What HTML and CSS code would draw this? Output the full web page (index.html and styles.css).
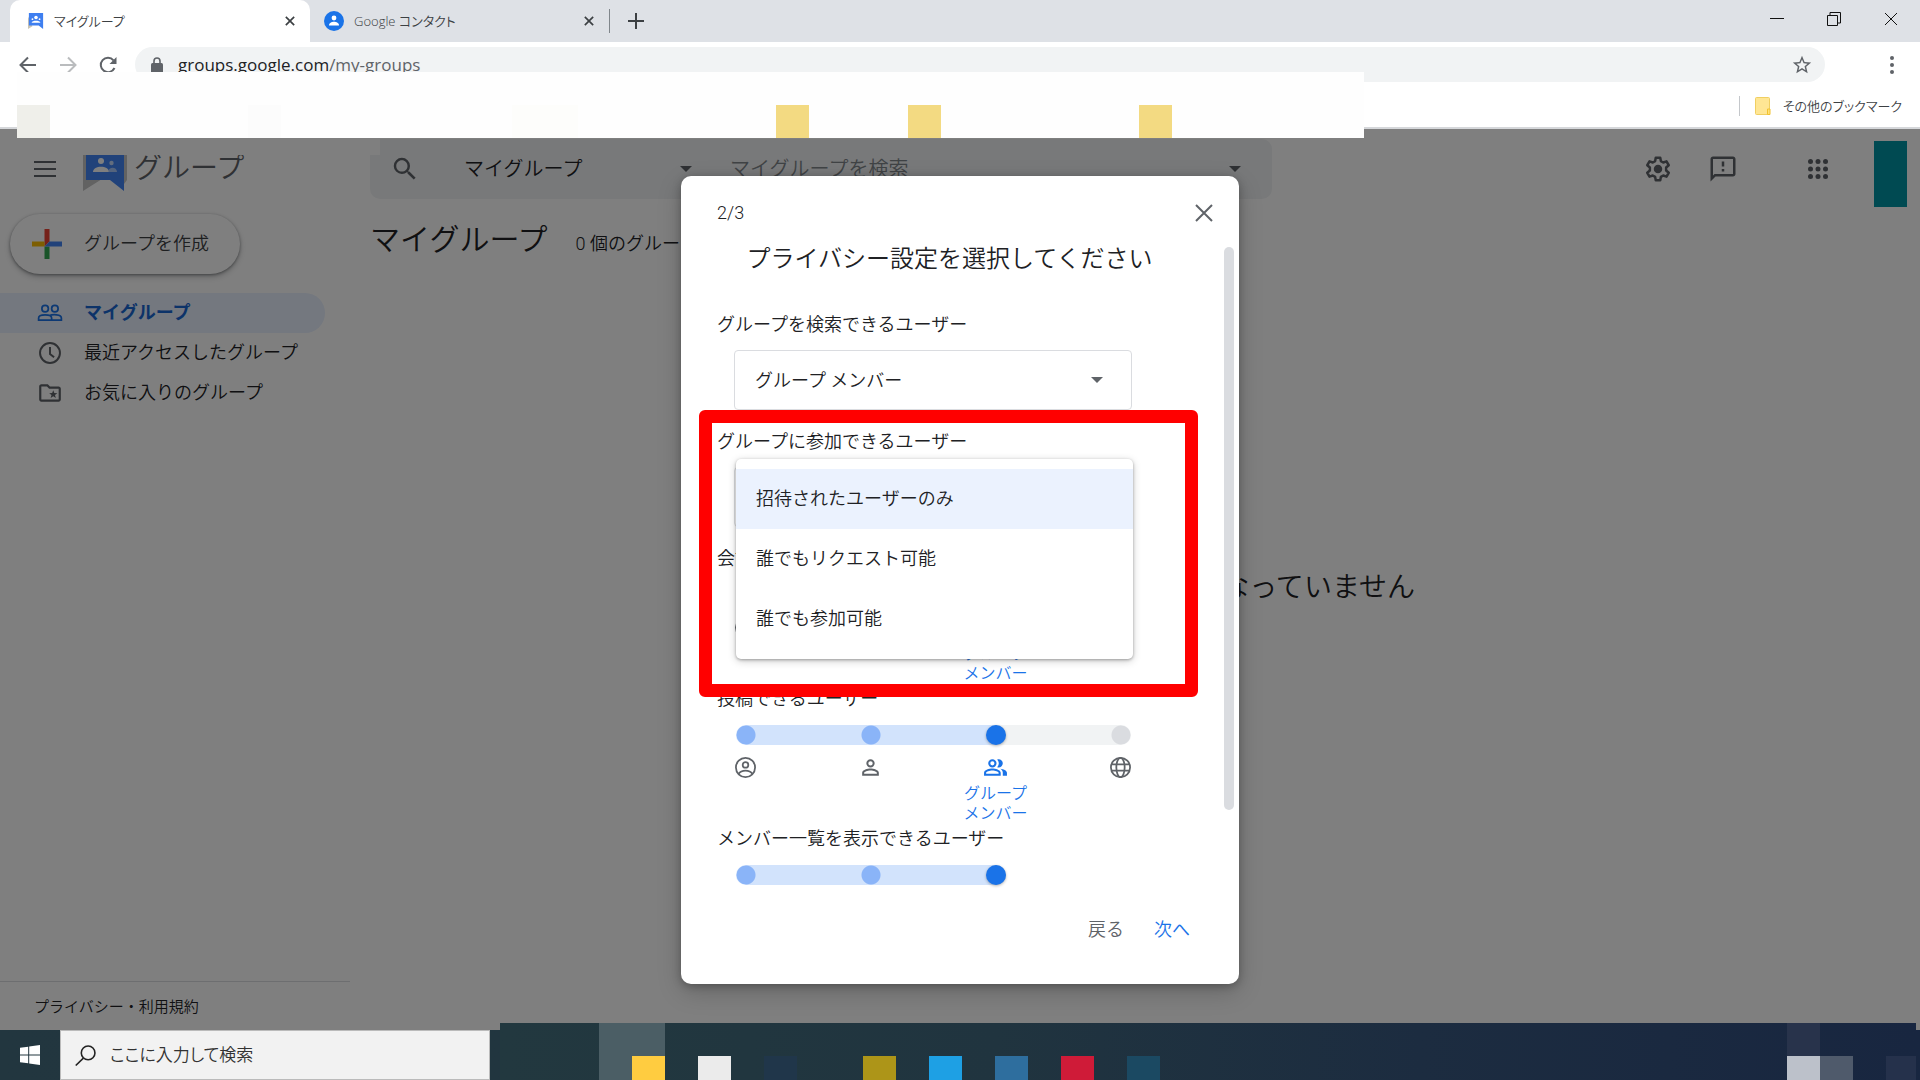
FILE: index.html
```html
<!DOCTYPE html>
<html lang="ja">
<head>
<meta charset="utf-8">
<meta name="viewport" content="width=device-width, initial-scale=1">
<title>マイグループ</title>
<link rel="stylesheet" href="styles.css">
</head>
<body>
<header class="chrome">
  <div class="tabstrip">
    <div class="tab tab-active">
      <svg class="favicon" viewBox="0 0 18 18"><path d="M0 4v14l5-3z" fill="#c9c4b4"/><path d="M1 0h16v18l-5-4H1z" fill="#3f7ff0"/><circle cx="9" cy="5" r="2" fill="#fff"/><circle cx="5" cy="7" r="1" fill="#fff"/><circle cx="13" cy="7" r="1" fill="#fff"/><path d="M4 11c1-3 9-3 10 0z" fill="#fff"/></svg>
      <span class="tab-title">マイグループ</span>
      <button class="tab-close" aria-label="タブを閉じる"><svg viewBox="0 0 12 12"><path d="M1 1l10 10M11 1L1 11"/></svg></button>
    </div>
    <div class="tab">
      <svg class="favicon favicon-round" viewBox="0 0 20 20"><circle cx="10" cy="10" r="10" fill="#1a73e8"/><circle cx="10" cy="7" r="2.4" fill="#fff"/><path d="M5 14.500c0-5 10-5 10 0z" fill="#fff"/></svg>
      <span class="tab-title">Google コンタクト</span>
      <button class="tab-close" aria-label="タブを閉じる"><svg viewBox="0 0 12 12"><path d="M1 1l10 10M11 1L1 11"/></svg></button>
    </div>
    <button class="new-tab" aria-label="新しいタブ"><svg viewBox="0 0 16 16"><path d="M8 0v16M0 8h16"/></svg></button>
    <div class="window-controls">
      <button aria-label="最小化"><svg viewBox="0 0 14 14"><path d="M0 6.500h14"/></svg></button>
      <button aria-label="元に戻す"><svg viewBox="0 0 14 14"><path d="M.5 3.500h10v10H.500zM3 3.500v-3h10.500v10.500H11"/></svg></button>
      <button aria-label="閉じる"><svg viewBox="0 0 14 14"><path d="M1 1l12 12M13 1L1 13"/></svg></button>
    </div>
  </div>
  <div class="toolbar">
    <button class="nav" aria-label="戻る"><svg viewBox="0 0 18 18"><path d="M17 9H2M9 1.500L1.500 9 9 16.500"/></svg></button>
    <button class="nav nav-off" aria-label="進む"><svg viewBox="0 0 18 18"><path d="M1 9h15M9 1.500L16.500 9 9 16.500"/></svg></button>
    <button class="nav" aria-label="再読み込み"><svg viewBox="0 0 18 18"><path d="M15.500 12A7.200 7.200 0 1 1 14.500 4.300"/><path d="M17.500 1v7h-7z" fill="#5f6368" stroke="none"/></svg></button>
    <div class="omnibox">
      <svg class="lock" viewBox="0 0 12 16"><rect y="6" width="12" height="10" rx="1.500" fill="#5f6368"/><path d="M3 7V4a3 3 0 0 1 6 0v3" fill="none" stroke="#5f6368" stroke-width="1.600"/></svg>
      <span class="url">groups.google.com<span class="path">/my-groups</span></span>
      <button class="star" aria-label="ブックマーク"><svg viewBox="0 0 24 24"><path d="M22 9.240l-7.190-.620L12 2 9.190 8.630 2 9.240l5.460 4.730L5.820 21 12 17.270 18.180 21l-1.630-7.030L22 9.240zM12 15.400l-3.760 2.270 1-4.280-3.320-2.880 4.380-.380L12 6.100l1.710 4.040 4.380.380-3.320 2.880 1 4.280L12 15.400z"/></svg></button>
    </div>
    <button class="kebab" aria-label="メニュー"><svg viewBox="0 0 4 18"><circle cx="2" cy="2" r="2"/><circle cx="2" cy="9" r="2"/><circle cx="2" cy="16" r="2"/></svg></button>
  </div>
  <nav class="bookmarks">
    <a href="#bookmarks"><svg class="folder" viewBox="0 0 16 18"><rect x=".5" y=".5" width="14" height="17" rx="1" fill="#ffe694" stroke="#f0cf62"/><path d="M12.500 12h2.500v5.500h-2.500z" fill="#ffe27a" stroke="#f2c230"/></svg>その他のブックマーク</a>
  </nav>
</header>

<div class="app">
  <div class="topbar">
    <button class="menu-btn" aria-label="メインメニュー"><svg viewBox="0 0 22 16"><path d="M0 0h22v2H0zM0 7h22v2H0zM0 14h22v2H0z"/></svg></button>
    <svg class="logo" viewBox="0 0 44 36"><path d="M0 0h5v24h14L0 36z" fill="#c4c4c4"/><path d="M41 0h3v25l-3 4z" fill="#c4c4c4"/><path d="M3 0h38v36L27 25H3z" fill="#4285f4"/><circle cx="18" cy="6" r="3" fill="#fff"/><path d="M10 17c0-7 16-7 16 0z" fill="#fff"/><circle cx="28.500" cy="8" r="2.200" fill="#c6dafc"/><path d="M25 17c1-6 9-5 9 0z" fill="#c6dafc" opacity=".8"/></svg>
    <span class="brand">グループ</span>
    <form class="search">
      <svg class="search-icon" viewBox="0 0 24 24"><path d="M15.500 14h-.790l-.280-.270A6.471 6.471 0 0 0 16 9.500 6.500 6.500 0 1 0 9.500 16c1.610 0 3.090-.590 4.230-1.570l.270.280v.790l5 4.990L20.490 19l-4.990-5zm-6 0C7.010 14 5 11.990 5 9.500S7.010 5 9.500 5 14 7.010 14 9.500 11.990 14 9.500 14z"/></svg>
      <span class="scope"><select aria-label="検索範囲"><option>マイグループ</option></select><i class="caret"></i></span>
      <input type="text" placeholder="マイグループを検索" aria-label="マイグループを検索">
      <i class="caret"></i>
    </form>
    <div class="actions">
      <button aria-label="設定"><svg class="i30" viewBox="0 0 24 24"><path fill="none" stroke="#5f6368" stroke-width="2" stroke-linejoin="round" d="M10.200 3h3.600l.5 2.700 1.900 1.100 2.600-.900 1.800 3.100-2.100 1.800v2.400l2.100 1.800-1.800 3.100-2.600-.900-1.900 1.100-.5 2.700h-3.600l-.5-2.700-1.900-1.100-2.600.900L3.400 15l2.100-1.800v-2.400L3.400 9l1.800-3.100 2.600.900 1.900-1.100z"/><circle cx="12" cy="12" r="3.400"/></svg></button>
      <button aria-label="フィードバック"><svg class="i30" viewBox="0 0 24 24"><path d="M20 2H4c-1.100 0-2 .9-2 2v18l4-4h14c1.100 0 2-.9 2-2V4c0-1.100-.9-2-2-2zm0 14H5.200L4 17.200V4h16v12zM11 12h2v2h-2zm0-6h2v4h-2z"/></svg></button>
      <button class="apps" aria-label="アプリ"><svg viewBox="0 0 20 20"><circle cx="2.500" cy="2.500" r="2.500"/><circle cx="10" cy="2.500" r="2.500"/><circle cx="17.500" cy="2.500" r="2.500"/><circle cx="2.500" cy="10" r="2.500"/><circle cx="10" cy="10" r="2.500"/><circle cx="17.500" cy="10" r="2.500"/><circle cx="2.500" cy="17.500" r="2.500"/><circle cx="10" cy="17.500" r="2.500"/><circle cx="17.500" cy="17.500" r="2.500"/></svg></button>
    </div>
  </div>
  <div class="columns">
    <aside class="sidebar">
      <button class="create"><svg viewBox="0 0 30 30"><path d="M12.500 0h5v12.500l-5 5z" fill="#ea4335"/><path d="M0 12.500h12.500v5H0z" fill="#fbbc04"/><path d="M12.500 17.500h5V30h-5z" fill="#34a853"/><path d="M17.500 12.500H30v5H12.500z" fill="#4285f4"/></svg>グループを作成</button>
      <nav class="side-nav">
        <a class="current" href="#my"><svg viewBox="0 0 24 24"><g fill="none" stroke="#1a73e8" stroke-width="1.600"><circle cx="7.500" cy="8" r="3"/><circle cx="16.500" cy="8" r="3"/><path d="M1.500 18.500v-2c0-3.600 12-3.600 12 0v2zM11.500 14.400c3-1.300 11-1.300 11 2.100v2h-9"/></g></svg>マイグループ</a>
        <a href="#recent"><svg viewBox="0 0 24 24"><circle cx="12" cy="12" r="9.200" fill="none" stroke="#5f6368" stroke-width="1.800"/><path d="M12 6.500V13l3.800 3" fill="none" stroke="#5f6368" stroke-width="1.800"/></svg>最近アクセスしたグループ</a>
        <a href="#starred"><svg viewBox="0 0 24 24"><path d="M20 6h-8l-2-2H4c-1.100 0-2 .9-2 2v12c0 1.100.9 2 2 2h16c1.100 0 2-.9 2-2V8c0-1.100-.9-2-2-2zm0 12H4V6h5.200l2 2H20v10z"/><path d="M15 9.500l1 2.600 2.800.1-2.200 1.700.8 2.700-2.400-1.500-2.400 1.500.8-2.700-2.200-1.700 2.800-.1z"/></svg>お気に入りのグループ</a>
      </nav>
      <footer class="legal"><a href="#legal">プライバシー・利用規約</a></footer>
    </aside>
    <main class="content">
      <div class="heading"><h1>マイグループ</h1><span>0 個のグループ</span></div>
      <p class="empty">どのグループのメンバーにもなっていません</p>
    </main>
  </div>
  <div class="scrim"></div>
  <div class="avatar"></div>
  <section class="dialog" role="dialog" aria-labelledby="dialog-title">
    <div class="dialog-head"><span>2/3</span><button aria-label="閉じる"><svg viewBox="0 0 18 18"><path d="M1 1l16 16M17 1L1 17"/></svg></button></div>
    <div class="dialog-body">
      <div class="fields">
        <h2 id="dialog-title">プライバシー設定を選択してください</h2>
        <div class="field">
          <label for="who-search">グループを検索できるユーザー</label>
          <div class="select"><select id="who-search"><option>グループ メンバー</option></select><i class="caret"></i></div>
        </div>
        <div class="field">
          <label for="who-join">グループに参加できるユーザー</label>
          <div class="select"><select id="who-join"><option>招待されたユーザーのみ</option></select>
            <div class="menu" role="listbox" aria-label="グループに参加できるユーザー">
              <button class="selected" role="option" aria-selected="true">招待されたユーザーのみ</button>
              <button role="option" aria-selected="false">誰でもリクエスト可能</button>
              <button role="option" aria-selected="false">誰でも参加可能</button>
            </div>
          </div>
        </div>
        <div class="slider-field">
          <label for="who-view">会話を閲覧できるユーザー</label>
          <input class="range four" id="who-view" type="range" min="0" max="3" value="2">
          <div class="stops">
            <svg viewBox="0 0 24 24"><use href="#i-owner"/></svg>
            <svg viewBox="0 0 24 24"><use href="#i-person"/></svg>
            <div class="stop-on"><svg viewBox="0 0 24 24"><use href="#i-people"/></svg><span>グループ<br>メンバー</span></div>
            <svg viewBox="0 0 24 24"><use href="#i-globe"/></svg>
          </div>
        </div>
        <div class="slider-field">
          <label for="who-post">投稿できるユーザー</label>
          <input class="range four" id="who-post" type="range" min="0" max="3" value="2">
          <div class="stops">
            <svg viewBox="0 0 24 24"><g id="i-owner"><circle cx="12" cy="12" r="9.200" fill="none" stroke="currentColor" stroke-width="1.700"/><circle cx="12" cy="9.500" r="2.700" fill="none" stroke="currentColor" stroke-width="1.700"/><path d="M5.500 18c2.500-4 10.500-4 13 0" fill="none" stroke="currentColor" stroke-width="1.700"/></g></svg>
            <svg viewBox="0 0 24 24"><path id="i-person" d="M12 5.900a2.100 2.100 0 1 1 0 4.200 2.100 2.100 0 0 1 0-4.200m0 9c2.970 0 6.100 1.460 6.100 2.100v1.100H5.900V17c0-.640 3.130-2.100 6.100-2.100M12 4a4 4 0 1 0 0 8 4 4 0 0 0 0-8zm0 9c-2.670 0-8 1.340-8 4v3h16v-3c0-2.660-5.330-4-8-4z"/></svg>
            <div class="stop-on"><svg viewBox="0 0 24 24"><path id="i-people" d="M16.670 13.130C18.040 14.060 19 15.320 19 17v3h4v-3c0-2.180-3.570-3.470-6.330-3.870zM15 12a4 4 0 0 0 0-8c-.47 0-.91.1-1.330.240a5.980 5.980 0 0 1 0 7.520c.42.140.86.240 1.330.240zM9 12a4 4 0 1 0 0-8 4 4 0 0 0 0 8zm0-6a2 2 0 1 1 0 4 2 2 0 0 1 0-4zm0 7c-2.670 0-8 1.340-8 4v3h16v-3c0-2.660-5.330-4-8-4zm6 5H3v-.99C3.200 16.290 6.300 15 9 15s5.800 1.290 6 2v1z"/></svg><span>グループ<br>メンバー</span></div>
            <svg viewBox="0 0 24 24"><g id="i-globe" fill="none" stroke="currentColor" stroke-width="1.700"><circle cx="12" cy="12" r="9.200"/><ellipse cx="12" cy="12" rx="4" ry="9.200"/><path d="M3.500 9h17M3.500 15h17"/></g></svg>
          </div>
        </div>
        <div class="slider-field">
          <label for="who-members">メンバー一覧を表示できるユーザー</label>
          <input class="range three" id="who-members" type="range" min="0" max="2" value="2">
        </div>
      </div>
      <div class="scroll-thumb"></div>
    </div>
    <div class="dialog-foot"><button>戻る</button><button class="primary">次へ</button></div>
    <div class="highlight"></div>
  </section>
</div>

<footer class="taskbar">
  <button class="start" aria-label="スタート"><svg viewBox="0 0 20 20"><path d="M0 2.800l8.200-1.100v7.800H0zM9.200 1.500L20 0v9.500H9.200zM0 10.500h8.200v7.800L0 17.200zM9.200 10.500H20V20L9.200 18.500z"/></svg></button>
  <label class="task-search"><svg viewBox="0 0 20 20"><circle cx="12.500" cy="7.500" r="6.500"/><path d="M8 12.500L.7 19.500"/></svg><input type="text" placeholder="ここに入力して検索" aria-label="ここに入力して検索"></label>
  <div class="task-mosaic">
    <i class="m-slate"></i><i class="m-amber"></i><i class="m-white"></i><i class="m-navy"></i><i class="m-olive"></i><i class="m-sky"></i><i class="m-steel"></i><i class="m-red"></i><i class="m-teal"></i><i class="m-dusk"></i><i class="m-silver"></i><i class="m-grey"></i><i class="m-end"></i>
  </div>
</footer>

<div class="bar-patch"></div>
<div class="bar-mosaic">
  <i class="b-grey"></i><i class="b-f1"></i><i class="b-f2"></i><i class="b-y1"></i><i class="b-y2"></i><i class="b-y3"></i>
</div>
</body>
</html>
```
FILE: styles.css
```css
* { box-sizing: border-box; }
body {
  margin: 0;
  min-height: 100vh;
  display: flex;
  flex-direction: column;
  position: relative;
  overflow: hidden;
  font-family: Roboto, "Noto Sans CJK JP", sans-serif;
  font-size: 18px;
  font-weight: 350;
  line-height: 20px;
  color: #202124;
}
button, input, select { font: inherit; color: inherit; margin: 0; padding: 0; border: 0; background: none; }
button { display: flex; align-items: center; justify-content: center; }
svg { display: block; flex: none; }
a { color: inherit; text-decoration: none; }

/* browser frame */
.chrome { height: 129px; border-bottom: 2px solid #d5d7da; background: #fff; font-family: "Open Sans", "Noto Sans CJK JP", sans-serif; font-size: 13px; font-feature-settings: "palt"; }
.tabstrip { height: 42px; padding-left: 10px; display: flex; background: #dee1e6; }
.tab { width: 299px; display: flex; align-items: center; padding: 0 12px 0 14px; color: #3c4043; }
.tab-active { width: 300px; padding-left: 18px; background: #fff; border-radius: 10px 10px 0 0; }
.favicon { width: 16px; height: 18px; margin-right: 10px; }
.favicon-round { width: 20px; height: 20px; }
.tab-title { flex: 1; }
.tab-close { width: 16px; height: 16px; }
.tab-close svg { width: 10px; height: 10px; stroke: #3c4043; stroke-width: 2; }
.new-tab { width: 54px; position: relative; }
.new-tab svg { width: 16px; height: 16px; stroke: #3c4043; stroke-width: 2; }
.new-tab::before { content: ""; width: 1px; height: 24px; background: #80868b; position: absolute; left: 0; top: 9px; }
.window-controls { margin-left: auto; padding-right: 1px; display: flex; height: 38px; }
.window-controls button { width: 57px; }
.window-controls svg { width: 14px; height: 14px; fill: none; stroke: #111; }
.toolbar { height: 45px; padding: 0 26px 0 18px; display: flex; align-items: center; }
.nav { width: 20px; margin-right: 20px; }
.nav svg { width: 18px; height: 18px; fill: none; stroke: #5f6368; stroke-width: 2; }
.nav-off svg { stroke: #babcbe; }
.omnibox { flex: 1; height: 35px; margin-right: 65px; padding: 0 12px 0 16px; display: flex; align-items: center; background: #f1f3f4; border-radius: 18px; }
.toolbar .nav:nth-child(3) { margin-right: 17px; }
.lock { width: 12px; height: 16px; margin-right: 15px; }
.url { flex: 1; font-size: 17px; font-weight: 400; }
.path { color: #5f6368; }
.star svg { width: 22px; height: 22px; fill: #5f6368; }
.kebab svg { width: 4px; height: 18px; fill: #5f6368; }
.bookmarks { height: 38px; padding-right: 18px; display: flex; justify-content: flex-end; align-items: center; }
.bookmarks a { display: flex; align-items: center; color: #3c4043; border-left: 1px solid #c4c7cb; padding-left: 15px; }
.folder { width: 16px; height: 18px; margin-right: 12px; }

/* groups application */
.app { flex: 1; display: flex; flex-direction: column; position: relative; background: #fff; }
.topbar { height: 70px; padding-top: 10px; display: flex; align-items: center; }
.menu-btn { width: 83px; padding-left: 7px; }
.menu-btn svg { width: 22px; height: 16px; fill: #5f6368; }
.logo { width: 44px; height: 36px; margin-top: 8px; }
.brand { width: 243px; padding-left: 7px; font-size: 28px; line-height: 36px; color: #5f6368; }
.search { flex: 0 1 902px; height: 60px; padding: 0 31px 0 20px; display: flex; align-items: center; background: #f1f3f4; border-radius: 10px; font-size: 20px; }
.search-icon { width: 30px; height: 30px; fill: #5f6368; margin-right: 44px; }
.scope { width: 228px; display: flex; align-items: center; }
.scope select { flex: 1; }
select { appearance: none; outline: none; }
.search input { flex: 1; margin-left: 38px; outline: none; }
.search input::placeholder { color: #80868b; opacity: 1; }
.caret { border: 6px solid transparent; border-top-color: #5f6368; border-bottom: 0; }
.actions { margin-left: auto; padding-right: 92px; display: flex; align-items: center; gap: 35px; }
.actions svg { fill: #5f6368; }
.i30 { width: 30px; height: 30px; }
.actions .apps { margin-left: 35px; }
.apps svg { width: 20px; height: 20px; }
.columns { flex: 1; display: flex; }
.sidebar { width: 350px; display: flex; flex-direction: column; padding-top: 15px; }
.create { width: 230px; height: 60px; margin-left: 10px; padding-left: 22px; justify-content: flex-start; gap: 22px; border-radius: 30px; background: #fff; color: #3c4043; box-shadow: 0 1px 3px #3c404388, 0 3px 6px #3c404344; }
.create svg { width: 30px; height: 30px; }
.side-nav { margin-top: 19px; }
.side-nav a { width: 325px; height: 40px; padding-left: 37px; display: flex; align-items: center; gap: 21px; border-radius: 0 20px 20px 0; }
.side-nav svg { width: 26px; height: 26px; fill: #5f6368; }
.side-nav .current { background: #e8f0fe; color: #1967d2; font-weight: 700; }
.legal { margin-top: auto; height: 49px; padding: 15px 34px; border-top: 1px solid #dadce0; font-size: 15px; }
.content { flex: 1; padding-left: 20px; display: flex; flex-direction: column; }
.heading { padding-top: 21px; display: flex; align-items: baseline; gap: 28px; }
.heading h1 { margin: 0; font-size: 30px; line-height: 40px; font-weight: 350; }
.empty { margin: 0 16px 0 0; padding: 308px 0; font-size: 28px; line-height: 40px; text-align: center; }
.scrim { position: absolute; inset: 0; background: #00000080; }
.avatar { position: absolute; top: 12px; right: 13px; width: 33px; height: 66px; background: #004a52; }

/* privacy dialog */
.dialog { position: absolute; top: 50%; left: 50%; transform: translate(-50%, -50%); width: 558px; padding: 22px 5px 39px 36px; background: #fff; border-radius: 10px; box-shadow: 0 2px 8px #00000040, 0 8px 24px #00000030; }
.dialog-head { height: 30px; margin-bottom: 19px; padding-right: 20px; display: flex; align-items: center; justify-content: space-between; }
.dialog-head button { width: 20px; height: 20px; }
.dialog-head svg { width: 18px; height: 18px; stroke: #5f6368; stroke-width: 2; }
.dialog-body { height: 653px; display: flex; justify-content: space-between; }
.fields { width: 465px; }
.fields h2 { margin: 0 0 44px; font-size: 24px; line-height: 24px; font-weight: 350; text-align: center; white-space: nowrap; }
.field { margin-bottom: 22px; }
.field label, .slider-field label { display: block; }
.select { position: relative; width: 398px; height: 60px; margin: 15px 0 0 17px; display: flex; align-items: center; border: 1px solid #dadce0; border-radius: 4px; }
.select select { flex: 1; height: 58px; padding: 2px 0 0 20px; }
.select .caret { margin-right: 28px; }
.menu { position: absolute; left: 1px; top: -9px; width: 397px; padding: 10px 0; z-index: 2; background: #fff; border-radius: 5px; box-shadow: 0 1px 3px #0000004d, 0 2px 8px #00000033; }
.menu button { width: 100%; height: 60px; padding-left: 20px; justify-content: flex-start; }
.menu .selected { background: #ebf2fe; }
.slider-field { margin-bottom: 5px; }
.range { appearance: none; display: block; height: 20px; margin: 16px 0 0 19px; border-radius: 10px; background-color: #f1f3f4; background-repeat: no-repeat; background-size: 20px 20px, 20px 20px, 20px 20px, 66% 20px; }
.four {
  width: 395px;
  background-image: radial-gradient(circle, #8ab4f8 9px, transparent 10px), radial-gradient(circle, #8ab4f8 9px, transparent 10px), radial-gradient(circle, #dadce0 9px, transparent 10px), linear-gradient(#d2e3fc, #d2e3fc);
  background-position: 0 0, 33.333% 0, 100% 0, 0 0;
}
.three {
  width: 270px;
  background-color: #d2e3fc;
  background-image: radial-gradient(circle, #8ab4f8 9px, transparent 10px), radial-gradient(circle, #8ab4f8 9px, transparent 10px);
  background-position: 0 0, 50% 0;
}
.range::-webkit-slider-thumb { appearance: none; width: 20px; height: 20px; border-radius: 50%; background: #1a73e8; box-shadow: 0 1px 3px #0000004d; }
.stops { width: 500px; height: 79px; margin-left: -34px; padding-top: 10px; display: grid; grid-template-columns: repeat(4, 1fr); justify-items: center; align-items: start; color: #5f6368; }
.stops svg { width: 25px; height: 25px; fill: currentColor; }
.stop-on { display: flex; flex-direction: column; align-items: center; gap: 4px; font-size: 16px; color: #1a73e8; text-align: center; }
.scroll-thumb { width: 10px; height: 563px; border-radius: 5px; background: #dadce0; }
.dialog-foot { margin-top: 15px; height: 30px; padding-right: 44px; display: flex; justify-content: flex-end; gap: 30px; color: #5f6368; }
.dialog-foot .primary { color: #1a73e8; }
.highlight { position: absolute; left: 18px; top: 234px; width: 499px; height: 287px; z-index: 3; border: 13px solid #f00; border-radius: 6px; pointer-events: none; }

/* taskbar */
.taskbar { height: 50px; position: relative; display: flex; background: linear-gradient(90deg, #22363f, #20343f 50%, #182640); font-family: "Open Sans", "Noto Sans CJK JP", sans-serif; }
.start { width: 60px; }
.start svg { width: 20px; height: 20px; fill: #fff; }
.task-search { width: 430px; padding-left: 14px; display: flex; align-items: center; gap: 14px; background: #f2f2f2; border: 1px solid #bbb; }
.task-search svg { width: 21px; height: 21px; fill: none; stroke: #222; stroke-width: 1.5; }
.task-search input { flex: 1; outline: none; font-size: 17px; font-feature-settings: "palt"; }
.task-search input::placeholder { color: #333; opacity: 1; }
.task-mosaic { position: absolute; left: 500px; right: 4px; top: -7px; bottom: 0; display: grid; grid-template: 33px 24px / repeat(42, 33px) 30px; background: linear-gradient(90deg, #22383f, #20343f 35%, #1c2c40 65%, #182640); }
.task-mosaic i { grid-row: 2; }
.task-mosaic .m-slate { grid-area: 1 / 4 / 3 / 6; background: #4b5e65; }
.m-amber { grid-column: 5; background: #ffcc40; }
.m-white { grid-column: 7; background: #ebebeb; }
.m-navy { grid-column: 9; background: #20364a; }
.m-olive { grid-column: 12; background: #ad9518; }
.m-sky { grid-column: 14; background: #1ea0e4; }
.m-steel { grid-column: 16; background: #2e6e9e; }
.m-red { grid-column: 18; background: #cf1b38; }
.m-teal { grid-column: 20; background: #1b4962; }
.task-mosaic .m-dusk { grid-area: 1 / 40; background: #28334b; }
.m-silver { grid-column: 40; background: #bcc1ca; }
.m-grey { grid-column: 41; background: #4f5a6b; }
.m-end { grid-column: 43; background: #25314b; }

/* blocked-out bookmark bar */
.bar-patch { position: absolute; left: 17px; top: 138px; width: 363px; height: 17px; background: #7f7f7f; }
.bar-mosaic { position: absolute; left: 17px; top: 72px; width: 1347px; height: 66px; display: grid; grid-template: 33px 33px / repeat(40, 33px); background: #fefefe; }
.bar-mosaic i { grid-row: 2; }
.b-grey { grid-column: 1; background: #efefea; }
.b-f1 { grid-column: 8; background: #fcfcfc; }
.b-f2 { grid-column: 16 / 18; background: #fdfdfb; }
.b-y1 { grid-column: 24; background: #f3da82; }
.b-y2 { grid-column: 28; background: #f3da82; }
.b-y3 { grid-column: 35; background: #f3da82; }
```
